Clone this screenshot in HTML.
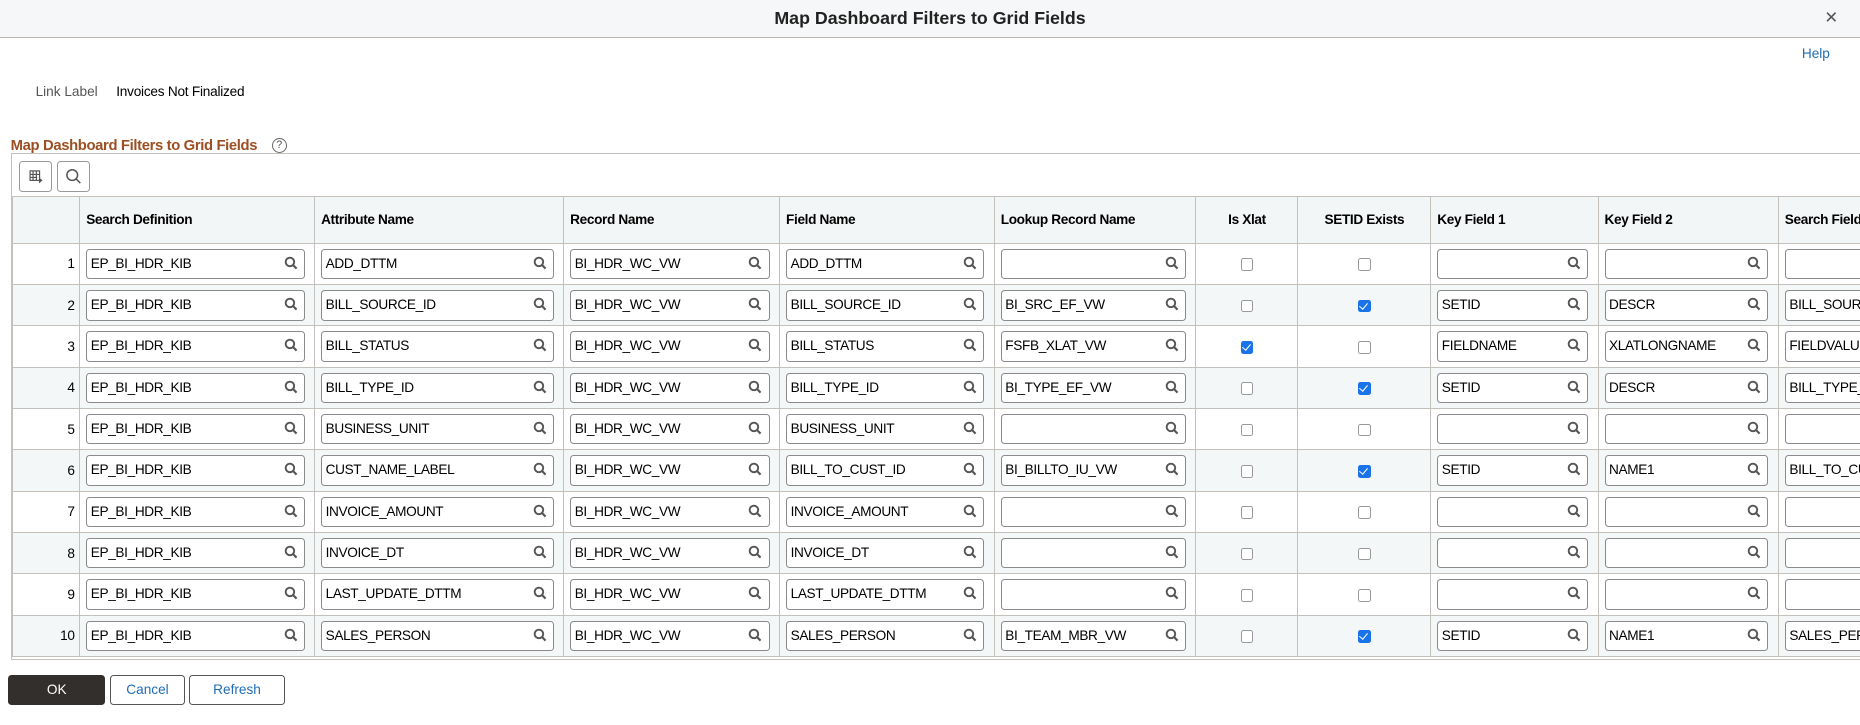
<!DOCTYPE html>
<html><head><meta charset="utf-8"><style>
html,body{margin:0;padding:0;background:#fff;overflow:hidden}
body{width:1860px;height:725px}
#w{zoom:1.18622;width:1568px;height:611px;position:relative;overflow:hidden;font-family:"Liberation Sans",Arial,sans-serif;color:#000}
.tb{position:absolute;left:0;top:0;width:1568px;height:31px;background:#f5f7f8;border-bottom:1px solid #b8b5b0}
.tt{position:absolute;left:0;right:0;top:7px;text-align:center;font-weight:bold;font-size:15px;color:#222}
.x{position:absolute;left:1538px;top:7px;font-size:14px;color:#555}
.help{position:absolute;left:1519px;top:39px;font-size:11.5px;color:#1f6db5}
.ll{position:absolute;left:30px;top:71px;font-size:11.5px;color:#555}
.lv{position:absolute;left:98px;top:71px;font-size:11.5px;letter-spacing:-0.2px}
.st{position:absolute;left:9px;top:116px;font-size:12.5px;font-weight:bold;color:#9c4f22;letter-spacing:-0.3px}
.q{position:absolute;left:229px;top:116px;width:11px;height:11px;border:1px solid #666;border-radius:50%;font-size:9px;line-height:11px;text-align:center;color:#555}
.grid{position:absolute;left:9px;top:129px;width:1600px;height:426px;border:1px solid #c4c1bd;border-right:none}
.btn{position:absolute;top:6px;width:26px;height:24px;border:1px solid #999;border-radius:3px;background:#fff}
table{position:absolute;left:0;top:35px;border-collapse:collapse;table-layout:fixed;width:1706px}
td,th{border:1px solid #c4c1bd;padding:0;font-size:11.5px;letter-spacing:-0.3px}
th{height:39px;background:#f3f6f7;text-align:left;padding-left:5px;font-weight:bold}
th.c{text-align:center;padding-left:0}
tr.r td{height:34px}
tr.e td{background:#f4f7f8}
td.n{text-align:right;padding-right:4px}
td.ck{text-align:center}
.in{margin-left:5px;margin-right:8px;height:24px;border:1px solid #8a8a8a;border-radius:3px;background:#fff;position:relative;line-height:24px;padding-left:3px;white-space:nowrap;overflow:hidden}
.in svg{position:absolute;right:5px;top:5px}
.cb{display:inline-block;width:9px;height:9px;border:1px solid #999;border-radius:2px;background:#fff;vertical-align:middle}
.cb.on{background:#1a73e8;border-color:#1a73e8;position:relative}
.cb.on:after{content:"";position:absolute;left:2px;top:0px;width:3px;height:6px;border:solid #fff;border-width:0 1.5px 1.5px 0;transform:rotate(40deg)}
.b{position:absolute;top:569px;height:24px;border:1px solid #555;border-radius:3px;font-size:11.5px;text-align:center;line-height:24px;background:#fff;color:#1f6db5}
</style></head><body><div id="w">
<div class="tb"><div class="tt">Map Dashboard Filters to Grid Fields</div><div class="x">✕</div></div>
<div class="help">Help</div>
<div class="ll">Link Label</div><div class="lv">Invoices Not Finalized</div>
<div class="st">Map Dashboard Filters to Grid Fields</div><div class="q">?</div>
<div class="grid">
<div class="btn" style="left:6px"><svg width="26" height="24" viewBox="0 0 26 24"><g fill="none" stroke="#555" stroke-width="1"><rect x="8.5" y="7.5" width="8" height="8"/><path d="M8.5 10.5h8M8.5 13h6M11 7.5v8M13.8 7.5v8"/></g><path d="M16 13l3 2.5-3 2.5z" fill="#555"/></svg></div>
<div class="btn" style="left:38px"><svg width="26" height="24" viewBox="0 0 26 24"><circle cx="12" cy="11" r="4.5" fill="none" stroke="#555" stroke-width="1.3"/><path d="M15.3 14.3l3.5 3.5" stroke="#555" stroke-width="1.3"/></svg></div>
<table>
<colgroup><col style="width:57px"><col style="width:198px"><col style="width:210px"><col style="width:182px"><col style="width:181px"><col style="width:170px"><col style="width:86px"><col style="width:112px"><col style="width:141px"><col style="width:152px"><col style="width:217px"></colgroup>
<tr><th></th><th>Search Definition</th><th>Attribute Name</th><th>Record Name</th><th>Field Name</th><th>Lookup Record Name</th><th class="c">Is Xlat</th><th class="c">SETID Exists</th><th>Key Field 1</th><th>Key Field 2</th><th>Search Field</th></tr>
</table>
</div>
<div class="b" style="left:7px;width:80px;background:#332f2c;color:#fff;border-color:#332f2c">OK</div>
<div class="b" style="left:93px;width:61px">Cancel</div>
<div class="b" style="left:159px;width:80px">Refresh</div>
</div>
<script>
var S='<svg width="12" height="12" viewBox="0 0 12 12"><circle cx="5" cy="5" r="3.6" fill="none" stroke="#555" stroke-width="1.6"/><path d="M7.6 7.6l3 3" stroke="#555" stroke-width="1.8"/></svg>';
var rows=[
["ADD_DTTM","ADD_DTTM","",0,0,"","",""],
["BILL_SOURCE_ID","BILL_SOURCE_ID","BI_SRC_EF_VW",0,1,"SETID","DESCR","BILL_SOURCE_ID"],
["BILL_STATUS","BILL_STATUS","FSFB_XLAT_VW",1,0,"FIELDNAME","XLATLONGNAME","FIELDVALUE"],
["BILL_TYPE_ID","BILL_TYPE_ID","BI_TYPE_EF_VW",0,1,"SETID","DESCR","BILL_TYPE_ID"],
["BUSINESS_UNIT","BUSINESS_UNIT","",0,0,"","",""],
["CUST_NAME_LABEL","BILL_TO_CUST_ID","BI_BILLTO_IU_VW",0,1,"SETID","NAME1","BILL_TO_CUST_ID"],
["INVOICE_AMOUNT","INVOICE_AMOUNT","",0,0,"","",""],
["INVOICE_DT","INVOICE_DT","",0,0,"","",""],
["LAST_UPDATE_DTTM","LAST_UPDATE_DTTM","",0,0,"","",""],
["SALES_PERSON","SALES_PERSON","BI_TEAM_MBR_VW",0,1,"SETID","NAME1","SALES_PERSON"]];
function inp(v,s){return '<td><div class="in">'+v+(s?S:'')+'</div></td>'}
function cb(o){return '<td class="ck"><span class="cb'+(o?' on':'')+'"></span></td>'}
var h='';rows.forEach(function(r,i){h+='<tr class="r'+(i%2?' e':'')+'"><td class="n">'+(i+1)+'</td>'+inp('EP_BI_HDR_KIB',1)+inp(r[0],1)+inp('BI_HDR_WC_VW',1)+inp(r[1],1)+inp(r[2],1)+cb(r[3])+cb(r[4])+inp(r[5],1)+inp(r[6],1)+inp(r[7],0)+'</tr>'});
document.querySelector('table tbody').insertAdjacentHTML('beforeend',h);
</script>
</body></html>
